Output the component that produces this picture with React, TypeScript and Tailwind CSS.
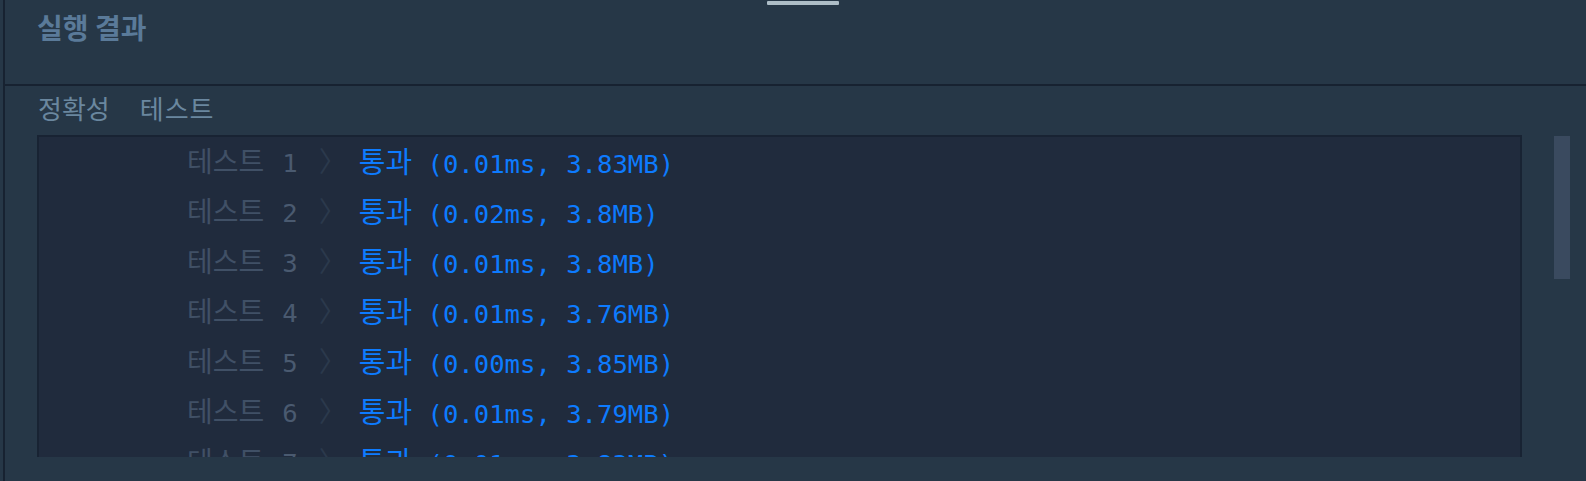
import React from "react";

const rows = [
  { n: 1, t: "0.01ms", m: "3.83MB" },
  { n: 2, t: "0.02ms", m: "3.8MB" },
  { n: 3, t: "0.01ms", m: "3.8MB" },
  { n: 4, t: "0.01ms", m: "3.76MB" },
  { n: 5, t: "0.00ms", m: "3.85MB" },
  { n: 6, t: "0.01ms", m: "3.79MB" },
  { n: 7, t: "0.01ms", m: "3.83MB" },
];

export default function App() {
  return (
    <div className="relative flex h-[481px] w-[1586px] overflow-hidden bg-[#263747]">
      <div className="absolute left-[767px] top-[1px] h-[4px] w-[72px] rounded-[1px] bg-[#adbdc7]" />
      <div className="ml-[3px] w-[2px] bg-[#172231]" />
      <div className="flex min-w-0 flex-1 flex-col">
        <div className="h-[86px] border-b-2 border-[#172231] pl-[32px] pt-[7px]">
          <div className="text-[28px] font-bold leading-[40px] text-[#5a7a99] [font-family:'Noto_Sans_CJK_KR',sans-serif]">
            실행 결과
          </div>
        </div>
        <div className="flex gap-[30px] pl-[33px] pt-[4px] text-[26px] leading-[36px] text-[#6a879f] [font-family:'Noto_Sans_CJK_KR',sans-serif]">
          <span>정확성</span>
          <span className="tracking-[1px]">테스트</span>
        </div>
        <div className="mt-[9px] flex h-[322px] pl-[32px]">
          <div className="flex-1 overflow-hidden border-2 border-b-0 border-[#182333] bg-[#202b3d]">
            <div className="pl-[148px] pt-[1px] text-[25.6px] leading-[50px] [font-family:'DejaVu_Sans_Mono','Noto_Sans_CJK_KR',monospace]">
              {rows.map((r) => (
                <div key={r.n} className="flex h-[50px] items-center whitespace-pre">
                  <span className="text-[28px] text-[#405066]">테스트</span>
                  <span className="ml-[18px] text-[#4a5a70]">{r.n}</span>
                  <span className="ml-[21px] text-[28px] text-[#2b394c]">〉</span>
                  <span className="ml-[12px] text-[#0d7bff]">
                    <span className="text-[29px]">통과</span> ({r.t}, {r.m})
                  </span>
                </div>
              ))}
            </div>
          </div>
          <div className="ml-[32px] mr-[16px] w-[16px] pt-[1px]">
            <div className="h-[143px] w-full bg-[#3a4a5f]" />
          </div>
        </div>
      </div>
    </div>
  );
}
